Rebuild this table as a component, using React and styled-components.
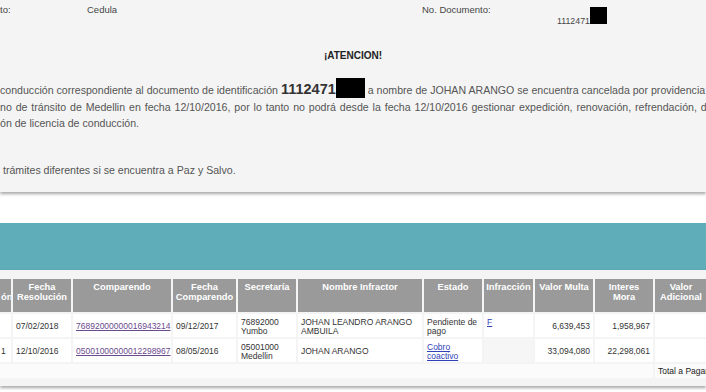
import styled, { createGlobalStyle } from "styled-components";

const GlobalStyle = createGlobalStyle`
  html, body {
    margin: 0;
    padding: 0;
    background: #ffffff;
    overflow: hidden;
  }
  body {
    font-family: "Liberation Sans", Arial, sans-serif;
    color: #333;
  }
`;

const columns = [
  { title: ["", "ón"], width: 11 },
  { title: ["Fecha", "Resolución"], width: 58 },
  { title: ["Comparendo"], width: 98 },
  { title: ["Fecha", "Comparendo"], width: 63 },
  { title: ["Secretaría"], width: 58 },
  { title: ["Nombre Infractor"], width: 124 },
  { title: ["Estado"], width: 58 },
  { title: ["Infracción"], width: 49 },
  { title: ["Valor Multa"], width: 58 },
  { title: ["Interes", "Mora"], width: 58 },
  { title: ["Valor", "Adicional"], width: 52 },
];

const rows = [
  {
    resolucion: "",
    fecha: "07/02/2018",
    comparendo: "76892000000016943214",
    fechaComparendo: "09/12/2017",
    secretaria: ["76892000", "Yumbo"],
    nombre: ["JOHAN LEANDRO ARANGO", "AMBUILA"],
    estado: { text: ["Pendiente de", "pago"], link: false },
    infraccion: "F",
    multa: "6,639,453",
    mora: "1,958,967",
  },
  {
    resolucion: "1",
    fecha: "12/10/2016",
    comparendo: "05001000000012298967",
    fechaComparendo: "08/05/2016",
    secretaria: ["05001000", "Medellin"],
    nombre: ["JOHAN ARANGO"],
    estado: { text: ["Cobro", "coactivo"], link: true },
    infraccion: "",
    multa: "33,094,080",
    mora: "22,298,061",
  },
];

function Lines({ items }) {
  return items.map((line, i) => (
    <span key={i}>
      {i > 0 && <br />}
      {line}
    </span>
  ));
}

export default function App() {
  return (
    <>
      <GlobalStyle />
      <Page>
        <NoticePanel>
          <InfoRow>
            <Label>to:</Label>
            <Label>Cedula</Label>
            <Label>No. Documento:</Label>
            <DocValue>
              1112471
              <Redacted $w={17} $h={17} />
            </DocValue>
          </InfoRow>

          <Title>¡ATENCION!</Title>

          <Notice>
            <FirstLine>
              conducción correspondiente al documento de identificación{" "}
              <BigNumber>1112471</BigNumber>
              <Redacted $w={29} $h={20} $shift={-4} /> a nombre de JOHAN
              ARANGO se encuentra cancelada por providencia
            </FirstLine>
            <Line $spread={0.95}>
              no de tránsito de Medellin en fecha 12/10/2016, por lo tanto no
              podrá desde la fecha 12/10/2016 gestionar expedición, renovación,
              refrendación, duplicado
            </Line>
            <Line>ón de licencia de conducción.</Line>
            <Line $gap={31} $indent={3}>
              trámites diferentes si se encuentra a Paz y Salvo.
            </Line>
          </Notice>
        </NoticePanel>

        <TealBar />

        <TablePanel>
          <Table>
            <thead>
              <tr>
                {columns.map((col, i) => (
                  <HeadCell key={i} $w={col.width}>
                    <Lines items={col.title} />
                  </HeadCell>
                ))}
              </tr>
            </thead>
            <tbody>
              {rows.map((row, i) => (
                <tr key={i}>
                  <Cell $pad={1}>{row.resolucion}</Cell>
                  <Cell>{row.fecha}</Cell>
                  <Cell>
                    <VisitedLink href="#">{row.comparendo}</VisitedLink>
                  </Cell>
                  <Cell>{row.fechaComparendo}</Cell>
                  <Cell>
                    <Lines items={row.secretaria} />
                  </Cell>
                  <Cell>
                    <Lines items={row.nombre} />
                  </Cell>
                  <Cell>
                    {row.estado.link ? (
                      <BlueLink href="#">
                        <Lines items={row.estado.text} />
                      </BlueLink>
                    ) : (
                      <Lines items={row.estado.text} />
                    )}
                  </Cell>
                  <Cell $top $empty={!row.infraccion}>
                    {row.infraccion && <BlueLink href="#">{row.infraccion}</BlueLink>}
                  </Cell>
                  <Cell $right>{row.multa}</Cell>
                  <Cell $right>{row.mora}</Cell>
                  <Cell />
                </tr>
              ))}
              <tr>
                <TotalCell colSpan={10} />
                <TotalCell>Total a Pagar</TotalCell>
              </tr>
            </tbody>
          </Table>
        </TablePanel>
      </Page>
    </>
  );
}

const Page = styled.div`
  width: 706px;
  height: 392px;
  overflow: hidden;
`;

const NoticePanel = styled.section`
  height: 192px;
  background: #f4f4f4;
  box-shadow: 0 2px 3px rgba(0, 0, 0, 0.35);
  padding-top: 4px;
  box-sizing: border-box;
  white-space: nowrap;
  overflow: hidden;
`;

const InfoRow = styled.div`
  display: grid;
  grid-template-columns: 87px 335px 135px 1fr;
  align-items: start;
  height: 28px;
`;

const Label = styled.div`
  font-size: 9.5px;
  line-height: 12px;
  color: #444;
`;

const DocValue = styled.div`
  margin-top: 3px;
  font-size: 8.8px;
  color: #444;
`;

const Redacted = styled.span`
  display: inline-block;
  width: ${(p) => p.$w}px;
  height: ${(p) => p.$h}px;
  background: #000;
  vertical-align: ${(p) => p.$shift ?? 0}px;
`;

const Title = styled.h4`
  margin: 18px 0 0;
  text-align: center;
  font-size: 10px;
  line-height: 12px;
  font-weight: bold;
  color: #222;
`;

const Notice = styled.div`
  margin-top: 16px;
  font-size: 10.6px;
  color: #555;
`;

const FirstLine = styled.div`
  height: 21px;
  line-height: 20px;
`;

const Line = styled.div`
  height: 16px;
  line-height: 16px;
  margin-top: ${(p) => p.$gap ?? 0}px;
  padding-left: ${(p) => p.$indent ?? 0}px;
  word-spacing: ${(p) => p.$spread ?? 0}px;
`;

const BigNumber = styled.b`
  font-size: 14.5px;
  color: #333;
`;

const TealBar = styled.div`
  height: 47px;
  margin-top: 31px;
  background: #5fadb8;
`;

const TablePanel = styled.section`
  background: #f4f4f4;
  padding: 7px 0 6px;
  box-shadow: 0 2px 3px rgba(0, 0, 0, 0.35);
`;

const Table = styled.table`
  table-layout: fixed;
  width: 711px;
  margin-left: -2px;
  border-collapse: separate;
  border-spacing: 2px;
  font-size: 8.5px;
  color: #333;
`;

const HeadCell = styled.th`
  box-sizing: border-box;
  width: ${(p) => p.$w}px;
  height: 33px;
  padding: 3px 1px 0;
  background: #9a9a9a;
  color: #fff;
  font-size: 9.3px;
  line-height: 10px;
  font-weight: bold;
  text-align: center;
  vertical-align: top;
  white-space: nowrap;
  overflow: hidden;
`;

const Cell = styled.td`
  box-sizing: border-box;
  height: 23px;
  padding: ${(p) => (p.$top ? "4px 3px 0" : `2px 3px 0 ${p.$pad ?? 3}px`)};
  background: ${(p) => (p.$empty ? "#f6f6f6" : "#fff")};
  line-height: 9px;
  text-align: ${(p) => (p.$right ? "right" : "left")};
  vertical-align: ${(p) => (p.$top ? "top" : "middle")};
  white-space: nowrap;
  overflow: hidden;
`;

const TotalCell = styled.td`
  height: 14px;
  padding: 0 3px;
  background: #fbfbfb;
  line-height: 14px;
  white-space: nowrap;
  color: #222;
`;

const VisitedLink = styled.a`
  color: #6b4a8e;
  text-decoration: underline;
`;

const BlueLink = styled.a`
  color: #3142b8;
  text-decoration: underline;
`;
